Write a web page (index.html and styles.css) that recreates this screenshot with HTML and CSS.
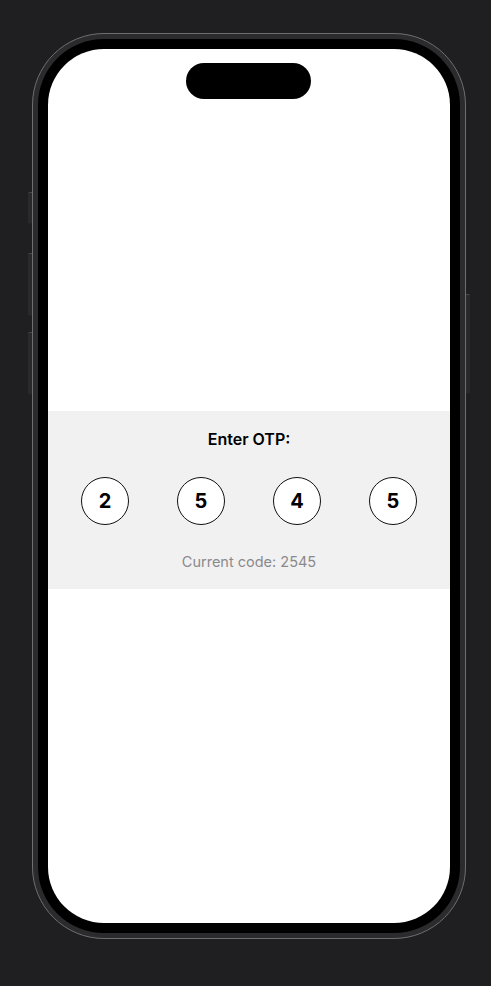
FILE: index.html
```html
<!DOCTYPE html>
<html lang="en">
<head>
<meta charset="utf-8">
<title>OTP</title>
<link rel="stylesheet" href="styles.css">
</head>
<body>
<div class="phone">
  <span class="btn btn-action"></span>
  <span class="btn btn-vol-up"></span>
  <span class="btn btn-vol-down"></span>
  <span class="btn btn-power"></span>
  <div class="bezel">
    <div class="screen">
      <div class="island"></div>
      <section class="otp">
        <h1 class="otp-title">Enter OTP:</h1>
        <div class="otp-digits">
          <div class="digit">2</div>
          <div class="digit">5</div>
          <div class="digit">4</div>
          <div class="digit">5</div>
        </div>
        <p class="otp-code">Current code: 2545</p>
      </section>
    </div>
  </div>
</div>
</body>
</html>
```
FILE: styles.css
```css
html, body {
  margin: 0;
  padding: 0;
  background: #1f1f21;
}
body {
  padding: 33px 0 0 32px;
  height: 986px;
  box-sizing: border-box;
  font-family: Inter, "Noto Sans", sans-serif;
}
.phone {
  position: relative;
  width: 434px;
  height: 906px;
  box-sizing: border-box;
  border: 1px solid #6e6e70;
  border-radius: 72px;
  background: #2b2b2d;
  padding: 5px;
}
.btn {
  position: absolute;
  width: 4px;
  background: #29292b;
  border-top: 1px solid #4a4a4c;
  border-bottom: 1px solid #232325;
  box-sizing: border-box;
}
.btn-action { left: -5px; top: 158px; height: 32px; border-radius: 2px 0 0 2px; }
.btn-vol-up { left: -5px; top: 219px; height: 63px; border-radius: 2px 0 0 2px; }
.btn-vol-down { left: -5px; top: 298px; height: 63px; border-radius: 2px 0 0 2px; }
.btn-power { right: -5px; top: 260px; height: 100px; border-radius: 0 2px 2px 0; }
.bezel {
  height: 100%;
  box-sizing: border-box;
  background: #000;
  border-radius: 66px;
  padding: 10px;
}
.screen {
  position: relative;
  height: 100%;
  background: #fff;
  border-radius: 56px;
  overflow: hidden;
  display: flex;
  flex-direction: column;
}
.island {
  position: absolute;
  top: 14px;
  left: 138px;
  width: 125px;
  height: 36px;
  border-radius: 18px;
  background: #000;
}
.otp {
  margin-top: 362px;
  background: #f1f1f1;
  padding: 18px 0 18px;
  display: flex;
  flex-direction: column;
  align-items: center;
}
.otp-title {
  margin: 0;
  font-size: 16px;
  line-height: 20px;
  font-weight: 600;
  color: #000;
}
.otp-digits {
  align-self: stretch;
  display: flex;
  justify-content: space-between;
  padding: 0 33px;
  margin-top: 28px;
}
.digit {
  width: 48px;
  height: 48px;
  box-sizing: border-box;
  border: 1.25px solid #111;
  border-radius: 50%;
  background: #fff;
  display: flex;
  align-items: center;
  justify-content: center;
  font-size: 20px;
  font-weight: 700;
  color: #000;
}
.otp-code {
  margin: 28px 0 0;
  font-size: 14.5px;
  line-height: 18px;
  color: #8a8a8c;
}
```
